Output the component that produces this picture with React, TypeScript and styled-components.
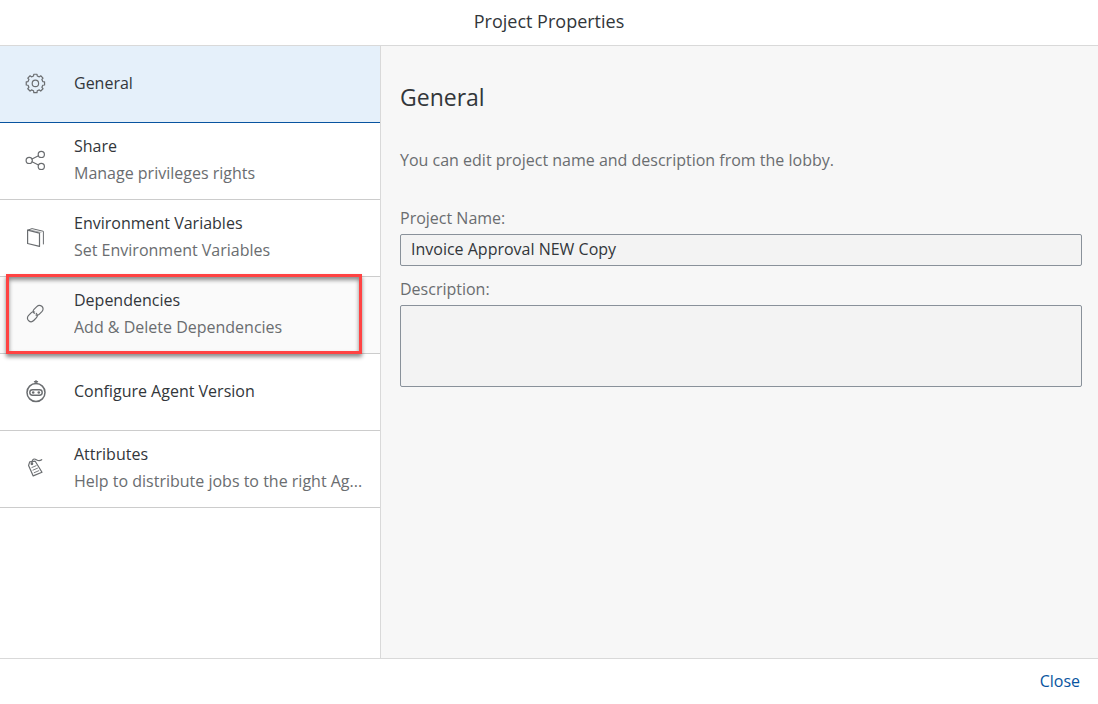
import React, { useId, useState } from "react";
import styled, { createGlobalStyle, css } from "styled-components";

const GlobalStyle = createGlobalStyle`
  *, *::before, *::after { box-sizing: border-box; }
  body { margin: 0; background: #fff; }
  body, button, input, textarea { font-family: "Open Sans", "Noto Sans", sans-serif; }
`;

const Dialog = styled.main`
  display: flex;
  flex-direction: column;
  min-height: 100vh;
  color: #32363a;
  font-size: 16px;
`;

const Header = styled.header`
  display: flex;
  justify-content: center;
  padding: 9px 16px 12px;
  border-bottom: 1px solid #d9d9d9;
`;

const Title = styled.h1`
  margin: 0;
  font-size: 18px;
  line-height: 24px;
  font-weight: 400;
`;

const Body = styled.div`
  display: flex;
  flex: 1;
`;

const Sidebar = styled.nav`
  flex: 0 0 381px;
  min-width: 0;
  border-right: 1px solid #d9d9d9;
`;

const List = styled.ul`
  margin: 0;
  padding: 0;
  list-style: none;
`;

const Entry = styled.li`
  position: relative;
`;

const Item = styled.button<{ $selected: boolean; $hovered: boolean }>`
  display: flex;
  align-items: center;
  gap: 19px;
  width: 100%;
  min-height: 77px;
  padding: 10px 16px 12px 15px;
  border: 0;
  border-bottom: 1px solid #ccc;
  background: #fff;
  color: #32363a;
  font-size: 16px;
  text-align: left;
  cursor: pointer;
  ${(p) => p.$hovered && css`background: #fafafa;`}
  ${(p) => p.$selected && css`background: #e5f0fa; border-bottom-color: #0854a0;`}
`;

const ItemText = styled.span`
  display: flex;
  flex: 1;
  flex-direction: column;
  min-width: 0;
  line-height: 27px;
`;

const ItemHint = styled.span`
  overflow: hidden;
  color: #6a6d70;
  text-overflow: ellipsis;
  white-space: nowrap;
`;

const Callout = styled.span`
  position: absolute;
  inset: -3px 18px 0 6px;
  border: 3px solid #ff4343;
  box-shadow: 0 3px 4px rgba(0, 0, 0, 0.45), inset 0 3px 4px rgba(0, 0, 0, 0.45);
  pointer-events: none;
  z-index: 1;
`;

const Glyph = styled.svg`
  flex: none;
  width: 40px;
  height: 40px;
  fill: none;
  stroke: #6a6d70;
  stroke-width: 1.2;
  stroke-linecap: round;
  stroke-linejoin: round;
`;

const Panel = styled.section`
  flex: 1;
  min-width: 0;
  padding: 35px 16px 24px 19px;
  background: #f7f7f7;
`;

const Heading = styled.h2`
  margin: 0 0 35px;
  font-size: 23px;
  line-height: 32px;
  font-weight: 400;
`;

const Note = styled.p`
  margin: 0 0 34px;
  color: #6a6d70;
  line-height: 24px;
`;

const Field = styled.div`
  display: flex;
  flex-direction: column;
  margin-bottom: 11px;
`;

const Label = styled.label`
  margin-bottom: 4px;
  color: #6a6d70;
  line-height: 24px;
`;

const controlStyle = css`
  display: block;
  width: 100%;
  margin: 0;
  border: 1px solid #89919a;
  border-radius: 2px;
  background: #f3f3f3;
  color: #32363a;
  font-size: 16px;
  outline: 0;
`;

const TextInput = styled.input`
  ${controlStyle}
  height: 32px;
  padding: 0 10px 2px;
`;

const TextArea = styled.textarea`
  ${controlStyle}
  height: 82px;
  padding: 6px 10px;
  resize: none;
`;

const Footer = styled.footer`
  display: flex;
  justify-content: flex-end;
  padding: 6px 8px 7px;
  border-top: 1px solid #d9d9d9;
`;

const CloseButton = styled.button`
  height: 32px;
  padding: 0 10px;
  border: 0;
  background: transparent;
  color: #0854a0;
  font-size: 16px;
  cursor: pointer;
`;

const gearPath = (() => {
  const cx = 20.4;
  const cy = 18.4;
  const point = (radius: number, degrees: number) => {
    const a = (degrees * Math.PI) / 180;
    return `${(cx + radius * Math.cos(a)).toFixed(2)} ${(cy + radius * Math.sin(a)).toFixed(2)}`;
  };
  const parts: string[] = [];
  for (let tooth = 0; tooth < 8; tooth++) {
    const mid = tooth * 45;
    parts.push(point(7.6, mid - 14), point(9.3, mid - 10), point(9.3, mid + 10), point(7.6, mid + 14));
  }
  return `M${parts.join("L")}Z`;
})();

const GearIcon = () => (
  <Glyph viewBox="0 -2 40 40" aria-hidden="true">
    <path d={gearPath} />
    <circle cx="20.4" cy="18.4" r="3.2" />
  </Glyph>
);

const ShareIcon = () => (
  <Glyph viewBox="0 0 40 40" aria-hidden="true">
    <circle cx="14.2" cy="20.4" r="3.1" />
    <circle cx="26.3" cy="14.4" r="3.1" />
    <circle cx="26.3" cy="26.4" r="3.1" />
    <path d="M17 19 23.5 15.8M17 21.8 23.5 25" />
  </Glyph>
);

const BookIcon = () => (
  <Glyph viewBox="0 0 40 40" aria-hidden="true">
    <path d="M12.6 13.2 24.5 16.1V29.4L12.6 26.5Z" />
    <path d="M12.6 13.2 17 11.6 28.4 14.3V27" strokeWidth="1" />
    <path d="M14.5 12.8 26 15.4" strokeWidth=".5" />
  </Glyph>
);

const LinkIcon = () => (
  <Glyph viewBox="0 0 40 40" aria-hidden="true">
    <path d="M19.3 19.4C17.9 18.3 17.8 16.6 19 15.4L21.8 12.6C23.2 11.2 25.3 11.1 26.8 12.3C28.4 13.7 28.5 15.9 27.1 17.4L24.4 20.1C23.4 21.1 22.1 21.5 20.9 21" />
    <path d="M21.3 19.5C22.6 20.7 22.7 22.4 21.5 23.6L18.7 26.5C17.3 27.9 15.2 28 13.7 26.7C12.1 25.3 12 23.1 13.4 21.6L16.1 18.9C17.1 17.9 18.4 17.5 19.6 18" />
  </Glyph>
);

const RobotIcon = () => (
  <Glyph viewBox="0 1 40 40" aria-hidden="true">
    <circle cx="21" cy="22.5" r="9" strokeWidth="1.5" />
    <rect x="14.8" y="19.8" width="12.4" height="5.4" rx="2.7" strokeWidth="1.4" />
    <g fill="#6a6d70" stroke="none">
      <circle cx="18.2" cy="22.5" r="1.3" />
      <circle cx="23.8" cy="22.5" r="1.3" />
    </g>
    <path d="M21 10.8V13.5M19.5 11.7H22.5" strokeWidth="1.4" />
  </Glyph>
);

const TagIcon = () => (
  <Glyph viewBox="0 1 40 40" strokeWidth="1.1" aria-hidden="true">
    <path d="M13.6 18.4 14.7 14.9 20.2 14.2 27 25.2 18.2 28.9Z" />
    <circle cx="16.9" cy="16.8" r=".8" fill="#6a6d70" />
    <path d="M17 16.3C16.6 13.2 18.3 11.4 20.3 12.2C22.5 13.1 23.6 15 26.7 12.7" />
    <path d="M16.9 20.5 21.1 18.7M18 23.1 22.5 21.2M19.2 25.7 23.8 23.7" strokeWidth=".9" />
  </Glyph>
);

interface Section {
  title: string;
  hint?: string;
  Icon: () => React.JSX.Element;
  hovered?: boolean;
}

const sections: Section[] = [
  { title: "General", Icon: GearIcon },
  { title: "Share", hint: "Manage privileges rights", Icon: ShareIcon },
  { title: "Environment Variables", hint: "Set Environment Variables", Icon: BookIcon },
  { title: "Dependencies", hint: "Add & Delete Dependencies", Icon: LinkIcon, hovered: true },
  { title: "Configure Agent Version", Icon: RobotIcon },
  { title: "Attributes", hint: "Help to distribute jobs to the right Ag...", Icon: TagIcon },
];

export default function App() {
  const [selected, setSelected] = useState("General");
  const nameId = useId();
  const descriptionId = useId();

  return (
    <Dialog>
      <GlobalStyle />
      <Header>
        <Title>Project Properties</Title>
      </Header>
      <Body>
        <Sidebar aria-label="Project settings">
          <List>
            {sections.map(({ title, hint, Icon, hovered = false }) => (
              <Entry key={title}>
                <Item
                  type="button"
                  $selected={selected === title}
                  $hovered={hovered}
                  aria-current={selected === title}
                  onClick={() => setSelected(title)}
                >
                  <Icon />
                  <ItemText>
                    <span>{title}</span>
                    {hint && <ItemHint>{hint}</ItemHint>}
                  </ItemText>
                </Item>
                {hovered && <Callout />}
              </Entry>
            ))}
          </List>
        </Sidebar>
        <Panel>
          <Heading>General</Heading>
          <Note>You can edit project name and description from the lobby.</Note>
          <Field>
            <Label htmlFor={nameId}>Project Name:</Label>
            <TextInput id={nameId} readOnly value="Invoice Approval NEW Copy" />
          </Field>
          <Field>
            <Label htmlFor={descriptionId}>Description:</Label>
            <TextArea id={descriptionId} readOnly />
          </Field>
        </Panel>
      </Body>
      <Footer>
        <CloseButton type="button">Close</CloseButton>
      </Footer>
    </Dialog>
  );
}
